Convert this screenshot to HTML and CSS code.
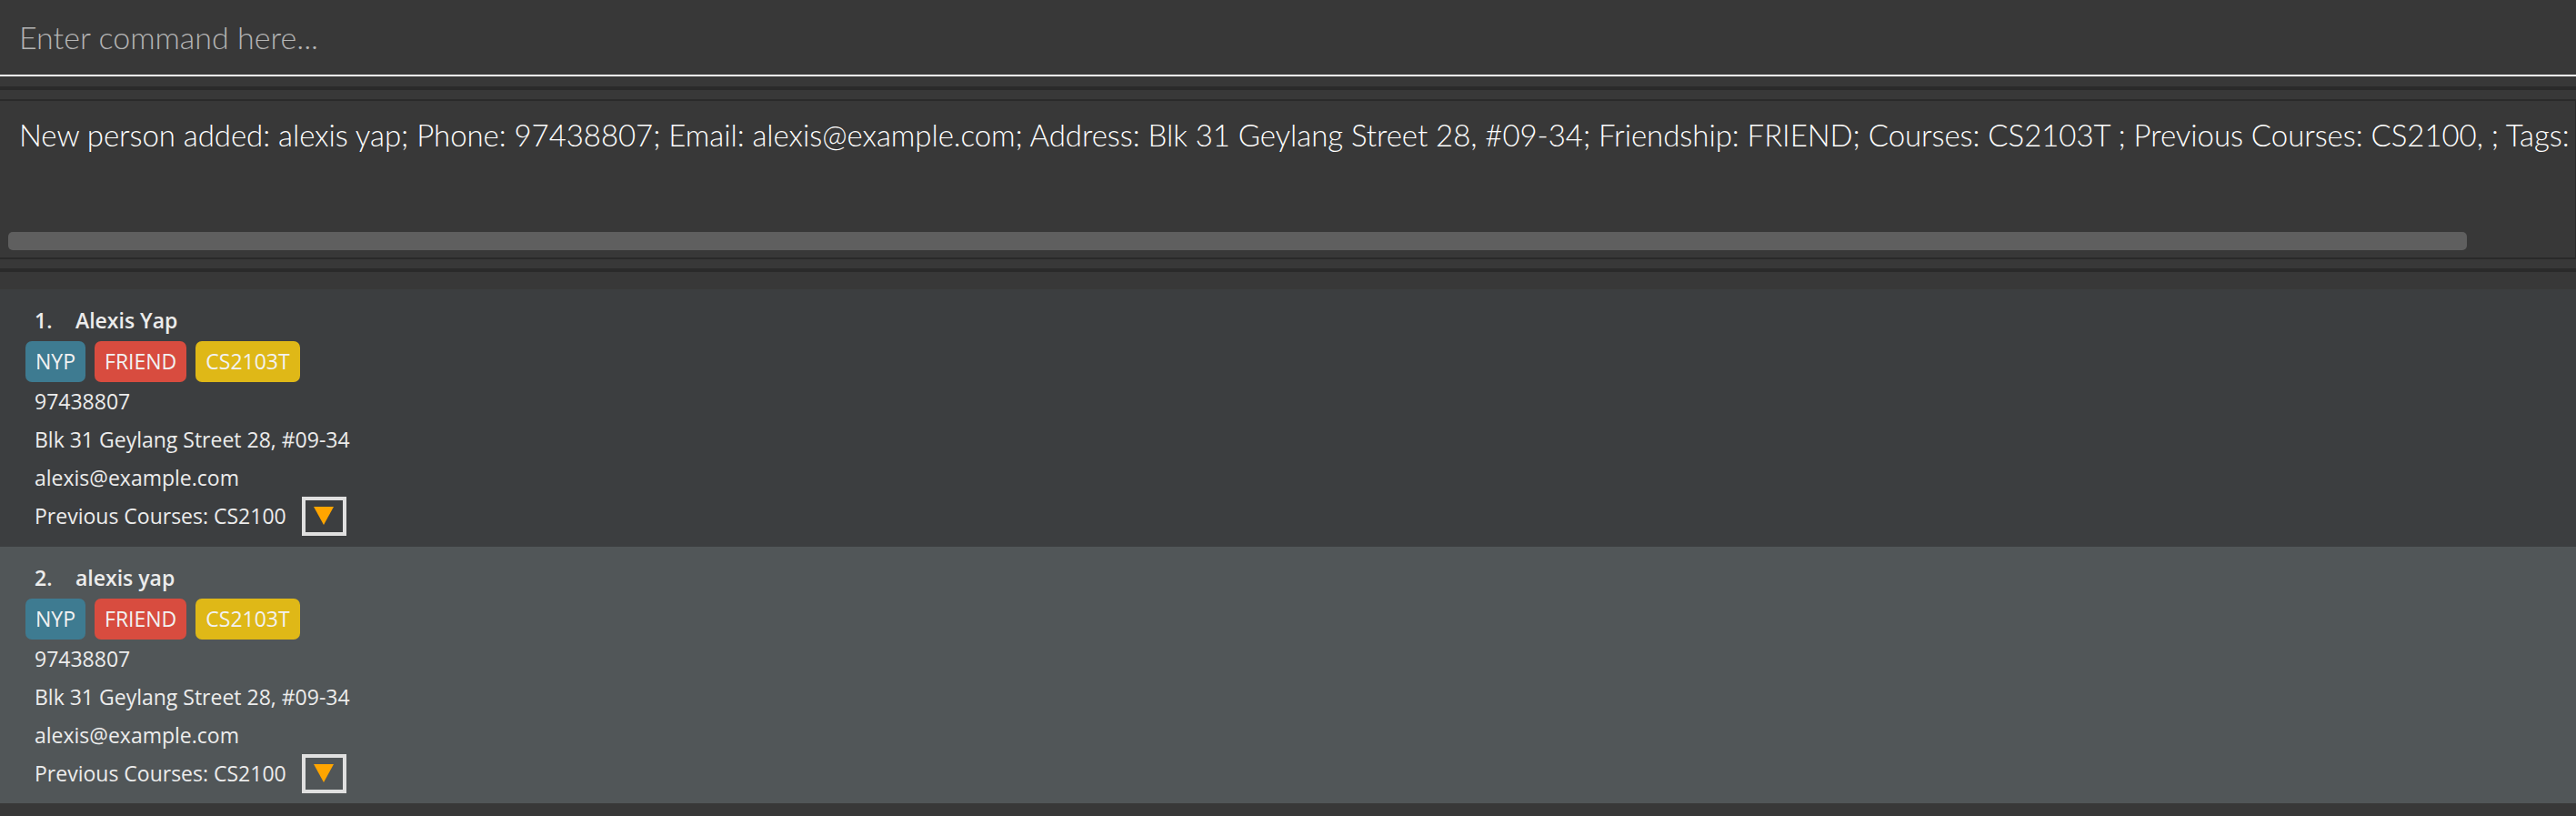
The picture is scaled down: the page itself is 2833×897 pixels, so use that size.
FILE: index.html
```html
<!DOCTYPE html>
<html>
<head>
<meta charset="utf-8">
<link rel="stylesheet" href="styles.css">
</head>
<body>
<div class="app">
  <div class="command"><span class="placeholder">Enter command here...</span></div>
  <div class="gap-a"></div>
  <div class="divider"></div>
  <div class="gap-b"></div>
  <div class="result">
    <div class="result-text">New person added: alexis yap; Phone: 97438807; Email: alexis@example.com; Address: Blk 31 Geylang Street 28, #09-34; Friendship: FRIEND; Courses: CS2103T ; Previous Courses: CS2100, ; Tags:</div>
    <div class="scrollbar"><div class="thumb"></div></div>
  </div>
  <div class="gap-c"></div>
  <div class="divider"></div>
  <div class="gap-d"></div>
  <div class="list">
    <div class="card even">
      <div class="name-row"><span class="idx">1.</span><span class="name">Alexis Yap</span></div>
      <div class="tags"><span class="tag nyp">NYP</span><span class="tag friend">FRIEND</span><span class="tag course">CS2103T</span></div>
      <div class="line">97438807</div>
      <div class="line">Blk 31 Geylang Street 28, #09-34</div>
      <div class="line">alexis@example.com</div>
      <div class="line prev"><span>Previous Courses: CS2100</span><span class="drop"><span class="tri"></span></span></div>
    </div>
    <div class="card odd">
      <div class="name-row"><span class="idx">2.</span><span class="name">alexis yap</span></div>
      <div class="tags"><span class="tag nyp">NYP</span><span class="tag friend">FRIEND</span><span class="tag course">CS2103T</span></div>
      <div class="line">97438807</div>
      <div class="line">Blk 31 Geylang Street 28, #09-34</div>
      <div class="line">alexis@example.com</div>
      <div class="line prev"><span>Previous Courses: CS2100</span><span class="drop"><span class="tri"></span></span></div>
    </div>
  </div>
</div>
</body>
</html>
```
FILE: styles.css
```css
html, body {
  margin: 0;
  padding: 0;
  background: #383838;
  overflow: hidden;
}
.app {
  width: 2833px;
  height: 897px;
  background: #383838;
  font-family: "Open Sans", "Noto Sans", sans-serif;
}
.command {
  height: 82px;
  border-bottom: 2px solid #ffffff;
  padding-left: 21px;
  display: flex;
  align-items: center;
}
.placeholder {
  font-family: "Lato Light", "Lato", "Open Sans", sans-serif;
  font-size: 34px;
  font-weight: 300;
  color: #b4b4b4;
  line-height: 82px;
}
.gap-a { height: 11px; }
.divider { height: 4px; background: #2a2a2a; }
.gap-b { height: 10px; background: #383838; }
.result {
  height: 172px;
  border-top: 2px solid #2a2a2a;
  border-bottom: 2px solid #2a2a2a;
  border-right: 1px solid #2a2a2a;
  overflow: hidden;
  display: flex;
  flex-direction: column;
}
.result-text {
  padding: 13px 0 0 21px;
  font-family: "Lato Light", "Lato", "Open Sans", sans-serif;
  font-size: 33px;
  font-weight: 300;
  letter-spacing: -0.06px;
  line-height: 48px;
  color: #ffffff;
  white-space: nowrap;
}
.scrollbar {
  margin-top: auto;
  margin-bottom: 8px;
  padding-left: 9px;
  height: 20px;
}
.thumb {
  width: 2704px;
  height: 20px;
  border-radius: 5px;
  background: #5f5f5f;
}
.gap-c { height: 10px; }
.gap-d { height: 19px; }
.list {
  display: flex;
  flex-direction: column;
}
.card {
  padding: 16px 0 0 0;
  color: #ececec;
  font-size: 23px;
}
.card.even { background: #3c3e40; height: 267px; }
.card.odd { background: #515658; height: 266px; }
.name-row {
  line-height: 36px;
  padding-left: 38px;
  font-weight: 600;
  display: flex;
}
.idx { width: 45px; }
.tags {
  display: flex;
  gap: 10px;
  padding-left: 28px;
  margin-top: 5px;
}
.tag {
  height: 45px;
  line-height: 45px;
  padding: 0 11px;
  border-radius: 7px;
  color: #f2f2f2;
  font-size: 23px;
}
.nyp { background: #3e7b91; }
.friend { background: #d84c3f; }
.course { background: #dfb817; }
.line {
  padding-left: 38px;
  line-height: 42px;
  height: 42px;
}
.line.prev {
  display: flex;
  align-items: center;
  gap: 17px;
}
.drop {
  box-sizing: border-box;
  width: 49px;
  height: 43px;
  border: 4px solid #e0e0e0;
  display: flex;
  align-items: center;
  justify-content: center;
}
.tri {
  width: 0;
  height: 0;
  border-left: 11px solid transparent;
  border-right: 11px solid transparent;
  border-top: 20px solid #ffa500;
}
```
